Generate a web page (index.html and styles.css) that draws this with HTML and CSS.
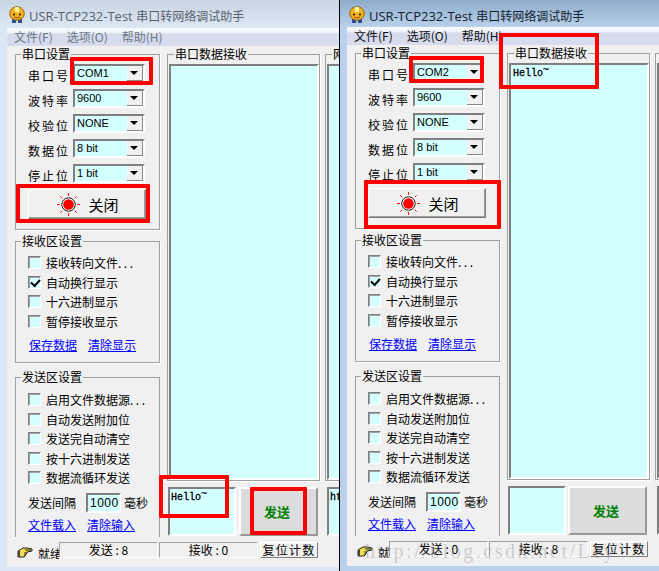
FILE: index.html
```html
<!DOCTYPE html>
<html lang="zh-CN">
<head>
<meta charset="utf-8">
<title>USR-TCP232-Test</title>
<link rel="stylesheet" href="styles.css">
</head>
<body>
<div class="desktop">

<section class="window win-a">
  <header class="titlebar">
    <svg class="app-icon" viewBox="0 0 16 17"><path d="M3 11h4v6H3zM9 11h4v6H9z" fill="#2b4f96"/><ellipse cx="8" cy="7.500" rx="7.300" ry="6.800" fill="#f6b21b" stroke="#8a6414"/><path d="M6 1h4v5H6z" fill="#fdf0a0"/><circle cx="5" cy="8.500" r="1.100" fill="#222"/><circle cx="11" cy="8.500" r="1.100" fill="#222"/><path d="M5 11q3 2 6 0" fill="none" stroke="#a03c10"/></svg>
    <span class="title-text">USR-TCP232-Test <span class="title-cjk">串口转网络调试助手</span></span>
  </header>
  <div class="client">
    <nav class="menubar"><span>文件(F)</span><span>选项(O)</span><span>帮助(H)</span></nav>
    <div class="main">
      <aside class="sidebar">
        <fieldset class="group group-port">
          <legend>串口设置</legend>
          <div class="field"><label>串口号</label><div class="combo"><span>COM1</span><i class="arrow"></i></div></div>
          <div class="field"><label>波特率</label><div class="combo"><span>9600</span><i class="arrow"></i></div></div>
          <div class="field"><label>校验位</label><div class="combo"><span>NONE</span><i class="arrow"></i></div></div>
          <div class="field"><label>数据位</label><div class="combo"><span>8 bit</span><i class="arrow"></i></div></div>
          <div class="field"><label>停止位</label><div class="combo"><span>1 bit</span><i class="arrow"></i></div></div>
          <button class="open-btn"><svg class="led" viewBox="0 0 24 24"><path d="M12 0v3M12 21v3M0 12h3M21 12h3M3.500 3.500l2 2M18.500 18.500l2 2M3.500 20.500l2-2M18.500 5.500l2-2" stroke="#f00" fill="none"/><circle cx="12" cy="12" r="7" fill="#fff" stroke="#111"/><circle cx="12" cy="12" r="5.500" fill="#f00"/></svg><span>关闭</span></button>
        </fieldset>
        <fieldset class="group group-recv">
          <legend>接收区设置</legend>
          <div class="check"><i class="box"></i><span>接收转向文件<span class="dots">...</span></span></div>
          <div class="check"><i class="box checked"></i><span>自动换行显示</span></div>
          <div class="check"><i class="box"></i><span>十六进制显示</span></div>
          <div class="check"><i class="box"></i><span>暂停接收显示</span></div>
          <div class="links links-recv"><a href="#">保存数据</a><a href="#">清除显示</a></div>
        </fieldset>
        <fieldset class="group group-send">
          <legend>发送区设置</legend>
          <div class="check"><i class="box"></i><span>启用文件数据源<span class="dots">...</span></span></div>
          <div class="check"><i class="box"></i><span>自动发送附加位</span></div>
          <div class="check"><i class="box"></i><span>发送完自动清空</span></div>
          <div class="check"><i class="box"></i><span>按十六进制发送</span></div>
          <div class="check"><i class="box"></i><span>数据流循环发送</span></div>
          <div class="interval"><span>发送间隔</span><div class="num">1000</div><span>毫秒</span></div>
          <div class="links links-send"><a href="#">文件载入</a><a href="#">清除输入</a></div>
        </fieldset>
      </aside>
      <div class="workspace">
        <div class="recv-row">
          <fieldset class="pane"><legend>串口数据接收</legend><div class="textbox"></div></fieldset>
          <fieldset class="pane"><legend>网络数据接收</legend><div class="textbox"></div></fieldset>
        </div>
        <div class="send-row">
          <div class="sendbox">Hello<span class="tilde">~</span></div>
          <button class="send-btn">发送</button>
          <div class="sendbox net">http://</div>
        </div>
      </div>
    </div>
    <footer class="status">
      <svg class="hand" viewBox="0 0 16 12"><path d="M1 4l5-3h4l5 1v2l-5 1v1l-1 1v1l-2 2H4L1 10z" fill="#f4e04c" stroke="#222"/><path d="M8 3h6M7 6h3M7 8h2" stroke="#222" fill="none"/><path d="M1 4h2v6H1z" fill="#444"/></svg>
      <span class="ready">就绪</span>
      <div class="panel">发送 : 8</div>
      <div class="panel">接收 : 0</div>
      <button class="reset">复位计数</button>
    </footer>
  </div>
  <div class="mark mark-a1"></div>
  <div class="mark mark-a2"></div>
  <div class="mark mark-a3"></div>
  <div class="mark mark-a4"></div>
</section>

<section class="window win-b">
  <header class="titlebar">
    <svg class="app-icon" viewBox="0 0 16 17"><path d="M3 11h4v6H3zM9 11h4v6H9z" fill="#2b4f96"/><ellipse cx="8" cy="7.500" rx="7.300" ry="6.800" fill="#f6b21b" stroke="#8a6414"/><path d="M6 1h4v5H6z" fill="#fdf0a0"/><circle cx="5" cy="8.500" r="1.100" fill="#222"/><circle cx="11" cy="8.500" r="1.100" fill="#222"/><path d="M5 11q3 2 6 0" fill="none" stroke="#a03c10"/></svg>
    <span class="title-text">USR-TCP232-Test <span class="title-cjk">串口转网络调试助手</span></span>
  </header>
  <div class="client">
    <nav class="menubar"><span>文件(F)</span><span>选项(O)</span><span>帮助(H)</span></nav>
    <div class="main">
      <aside class="sidebar">
        <fieldset class="group group-port">
          <legend>串口设置</legend>
          <div class="field"><label>串口号</label><div class="combo"><span>COM2</span><i class="arrow"></i></div></div>
          <div class="field"><label>波特率</label><div class="combo"><span>9600</span><i class="arrow"></i></div></div>
          <div class="field"><label>校验位</label><div class="combo"><span>NONE</span><i class="arrow"></i></div></div>
          <div class="field"><label>数据位</label><div class="combo"><span>8 bit</span><i class="arrow"></i></div></div>
          <div class="field"><label>停止位</label><div class="combo"><span>1 bit</span><i class="arrow"></i></div></div>
          <button class="open-btn"><svg class="led" viewBox="0 0 24 24"><path d="M12 0v3M12 21v3M0 12h3M21 12h3M3.500 3.500l2 2M18.500 18.500l2 2M3.500 20.500l2-2M18.500 5.500l2-2" stroke="#f00" fill="none"/><circle cx="12" cy="12" r="7" fill="#fff" stroke="#111"/><circle cx="12" cy="12" r="5.500" fill="#f00"/></svg><span>关闭</span></button>
        </fieldset>
        <fieldset class="group group-recv">
          <legend>接收区设置</legend>
          <div class="check"><i class="box"></i><span>接收转向文件<span class="dots">...</span></span></div>
          <div class="check"><i class="box checked"></i><span>自动换行显示</span></div>
          <div class="check"><i class="box"></i><span>十六进制显示</span></div>
          <div class="check"><i class="box"></i><span>暂停接收显示</span></div>
          <div class="links links-recv"><a href="#">保存数据</a><a href="#">清除显示</a></div>
        </fieldset>
        <fieldset class="group group-send">
          <legend>发送区设置</legend>
          <div class="check"><i class="box"></i><span>启用文件数据源<span class="dots">...</span></span></div>
          <div class="check"><i class="box"></i><span>自动发送附加位</span></div>
          <div class="check"><i class="box"></i><span>发送完自动清空</span></div>
          <div class="check"><i class="box"></i><span>按十六进制发送</span></div>
          <div class="check"><i class="box"></i><span>数据流循环发送</span></div>
          <div class="interval"><span>发送间隔</span><div class="num">1000</div><span>毫秒</span></div>
          <div class="links links-send"><a href="#">文件载入</a><a href="#">清除输入</a></div>
        </fieldset>
      </aside>
      <div class="workspace">
        <div class="recv-row">
          <fieldset class="pane"><legend>串口数据接收</legend><div class="textbox">Hello<span class="tilde">~</span></div></fieldset>
          <fieldset class="pane"><legend>网络数据接收</legend><div class="textbox"></div></fieldset>
        </div>
        <div class="send-row">
          <div class="sendbox"></div>
          <button class="send-btn">发送</button>
          <div class="sendbox net"></div>
        </div>
      </div>
    </div>
    <footer class="status">
      <svg class="hand" viewBox="0 0 16 12"><path d="M1 4l5-3h4l5 1v2l-5 1v1l-1 1v1l-2 2H4L1 10z" fill="#f4e04c" stroke="#222"/><path d="M8 3h6M7 6h3M7 8h2" stroke="#222" fill="none"/><path d="M1 4h2v6H1z" fill="#444"/></svg>
      <span class="ready">就绪</span>
      <div class="panel">发送 : 0</div>
      <div class="panel">接收 : 8</div>
      <button class="reset">复位计数</button>
    </footer>
  </div>
  <div class="watermark">http://blog.csdn.net/Ley</div>
  <div class="mark mark-b1"></div>
  <div class="mark mark-b2"></div>
  <div class="mark mark-b3"></div>
</section>

</div>
</body>
</html>
```
FILE: styles.css
```css
* { box-sizing: border-box; }
html, body { margin: 0; padding: 0; }
body {
  font-family: "Noto Sans CJK SC", "Liberation Sans", sans-serif;
  font-size: 12px;
  color: #000;
  background: #000;
}
button { font-family: inherit; margin: 0; padding: 0; }
.desktop {
  position: relative;
  width: 659px;
  height: 571px;
  overflow: hidden;
  background: #000;
}

/* windows on the desktop */
.window {
  position: absolute;
  top: 0;
  height: 571px;
  overflow: hidden;
  display: flex;
  flex-direction: column;
}
.win-a {
  left: 0;
  width: 339px;
  background: #dbe6f4;
  --title-h: 28px;
  --title-a: #c9d5e3;
  --title-b: #dde7f3;
  --title-ink: #56616e;
  --menu-ink: #6b7788;
  --pane-w: 153px;
  --send-w: 68px;
  --send-gap: 3px;
  --net-gap: 9px;
  --ready-w: 21px;
}
.win-b {
  left: 340px;
  width: 319px;
  background: #b9d1ea;
  --title-h: 27px;
  --title-a: #8eacca;
  --title-b: #b9d1ea;
  --title-ink: #10202e;
  --menu-ink: #111;
  --pane-w: 143px;
  --send-w: 58px;
  --send-gap: 2px;
  --net-gap: 10px;
  --ready-w: 11px;
}

.titlebar {
  flex: none;
  height: var(--title-h);
  padding: 6px 0 0 9px;
  display: flex;
  align-items: flex-start;
  background: linear-gradient(var(--title-a), var(--title-b));
}
.app-icon { width: 16px; height: 17px; flex: none; }
.title-text {
  margin-left: 4px;
  font-family: "Open Sans", "Noto Sans CJK SC", sans-serif;
  font-size: 13px;
  line-height: 20px;
  color: var(--title-ink);
  white-space: nowrap;
}
.title-cjk { font-family: "Noto Sans CJK SC", sans-serif; font-size: 12px; }

.client {
  flex: none;
  margin-left: 7px;
  width: 340px;
  height: 539px;
  background: #f0f0f0;
  display: flex;
  flex-direction: column;
}
.menubar {
  flex: none;
  height: 18px;
  padding-left: 7px;
  display: flex;
  gap: 14px;
  line-height: 18px;
  color: var(--menu-ink);
  background: linear-gradient(#fbfcfe, #eef2f9 25%, #d6dbee 35%, #d6dbee);
}
.main { flex: none; display: flex; height: 491px; padding-left: 8px; }

/* left column */
.sidebar { flex: none; width: 145px; display: flex; flex-direction: column; }
.group, .pane {
  margin: 0;
  min-width: 0;
  border: 1px solid #a0a0a0;
  padding: 0;
  box-shadow: 1px 1px 0 #fff;
}
legend {
  margin-left: 6px;
  padding: 0 1px;
  line-height: 16px;
  height: 16px;
  white-space: nowrap;
}
.group legend { margin-left: -7px; }
.group-port { height: 184px; padding: 2px 0 0 12px; }
.group-recv { height: 130px; margin-top: 3px; padding: 4px 0 0 12px; }
.group-send {
  height: 168px;
  margin-top: 6px;
  padding: 5px 0 0 12px;
  border-bottom: 0;
  box-shadow: none;
}

.field { display: flex; height: 18px; margin-bottom: 7px; }
.field label {
  width: 45px;
  padding-top: 3px;
  letter-spacing: 2px;
  line-height: 18px;
  white-space: nowrap;
}
.combo {
  width: 72px;
  height: 19px;
  display: flex;
  justify-content: space-between;
  background: #d4ffff;
  border: 2px solid;
  border-color: #7f7f7f #fff #fff #7f7f7f;
  font-family: "Liberation Sans", sans-serif;
  font-size: 11px;
  line-height: 15px;
  padding-left: 2px;
}
.combo .arrow {
  width: 16px;
  height: 15px;
  background: #f0f0f0;
  border-right: 1px solid #8a8a8a;
  border-bottom: 1px solid #8a8a8a;
  position: relative;
}
.arrow::after {
  content: "";
  position: absolute;
  left: 3px;
  top: 5px;
  border: 4px solid transparent;
  border-top: 4px solid #000;
  border-bottom: 0;
}

.open-btn {
  width: 118px;
  height: 30px;
  margin-top: 2px;
  padding-left: 2px;
  display: flex;
  align-items: center;
  justify-content: center;
  gap: 8px;
  background: #f0f0f0;
  border: 1px solid;
  border-color: #fff #7f7f7f #7f7f7f #fff;
  box-shadow: inset -1px -1px 0 #a0a0a0;
  font-size: 15px;
}
.led { width: 23px; height: 23px; flex: none; }

.check { display: flex; align-items: center; height: 19.500px; gap: 5px; white-space: nowrap; }
.dots { letter-spacing: 2.500px; }
.box {
  width: 13px;
  height: 13px;
  flex: none;
  background: #d4ffff;
  border: 1px solid;
  border-color: #7f7f7f #fff #fff #7f7f7f;
  box-shadow: inset 1px 1px 0 #a0a0a0;
  position: relative;
}
.box.checked::after {
  content: "";
  position: absolute;
  left: 2px;
  top: 2px;
  width: 7px;
  height: 4px;
  border-left: 2px solid #000;
  border-bottom: 2px solid #000;
  transform: rotate(-48deg);
}
.links { display: flex; height: 16px; line-height: 16px; gap: 11px; }
.links a { color: #00f; text-decoration: underline; }
.links-recv { margin: 6px 0 0 1px; }
.links-send { margin-top: 4px; }
.interval { display: flex; align-items: center; height: 20px; margin-top: 5px; white-space: nowrap; }
.num {
  width: 35px;
  height: 20px;
  margin: 0 3px 0 10px;
  padding-left: 2px;
  background: #d4ffff;
  border: 2px solid;
  border-color: #7f7f7f #fff #fff #7f7f7f;
  font-family: "Liberation Sans", sans-serif;
  font-size: 12px;
  letter-spacing: 0.500px;
  line-height: 16px;
}

/* receive / send */
.workspace { flex: none; margin-left: 7px; width: 200px; }
.recv-row { display: flex; gap: 5px; height: 435px; width: 400px; }
.pane { flex: none; width: var(--pane-w); height: 435px; display: flex; flex-direction: column; }
.textbox {
  height: 417px;
  margin: 2px 0 0 1px;
  padding: 2px 2px;
  background: #d4ffff;
  border: 2px solid;
  border-color: #7f7f7f #fff #fff #7f7f7f;
  font-family: "Liberation Mono", monospace;
  font-size: 10px;
  line-height: 14px;
  -webkit-text-stroke: 0.300px #000;
}
.tilde { position: relative; top: -3px; }
.send-row { display: flex; height: 49px; margin: 6px 0 0 1px; width: 400px; }
.sendbox {
  flex: none;
  width: var(--send-w);
  background: #d4ffff;
  border: 2px solid;
  border-color: #7f7f7f #fff #fff #7f7f7f;
  padding: 2px 0 0 1px;
  font-family: "Liberation Mono", monospace;
  font-size: 10px;
  line-height: 14px;
  -webkit-text-stroke: 0.300px #000;
}
.send-btn {
  flex: none;
  width: 79px;
  margin-left: var(--send-gap);
  padding-right: 3px;
  background: #dcdcdc;
  border: 2px solid;
  border-color: #fff #999 #999 #fff;
  color: #008000;
  font-size: 13px;
  font-weight: bold;
}
.sendbox.net { width: 60px; margin-left: var(--net-gap); }

/* status bar */
.status { flex: none; display: flex; height: 22px; padding: 5px 0 0 10px; }
.hand { width: 16px; height: 12px; flex: none; margin: 5px 5px 0 0; }
.ready { flex: none; width: var(--ready-w); overflow: hidden; white-space: nowrap; line-height: 20px; margin-top: 2px; }
.panel {
  flex: none;
  height: 16px;
  width: 99px;
  margin-right: 1px;
  background: #f0f0f0;
  border: 1px solid;
  border-color: #a0a0a0 #fff #fff #a0a0a0;
  text-align: center;
  line-height: 14px;
  white-space: nowrap;
}
.reset {
  flex: none;
  width: 58px;
  height: 16px;
  margin-left: 1px;
  font-size: 12px;
  letter-spacing: 1.300px;
  line-height: 14px;
  background: #f0f0f0;
  border: 1px solid;
  border-color: #fff #7f7f7f #7f7f7f #fff;
  white-space: nowrap;
}

/* overlays */
.watermark {
  position: absolute;
  left: 25px;
  top: 539px;
  font-family: "Liberation Serif", serif;
  font-size: 20px;
  letter-spacing: 2.500px;
  line-height: 24px;
  color: rgba(130, 130, 130, 0.35);
  white-space: nowrap;
  pointer-events: none;
}
.mark { position: absolute; border: 4px solid #f00; border-radius: 1px; }
.mark-a1 { left: 70px; top: 57px; width: 83px; height: 28px; }
.mark-a2 { left: 16px; top: 184px; width: 134px; height: 39px; }
.mark-a3 { left: 159px; top: 475px; width: 70px; height: 43px; }
.mark-a4 { left: 250px; top: 487px; width: 57px; height: 48px; }
.mark-b1 { left: 69px; top: 56px; width: 75px; height: 27px; }
.mark-b2 { left: 159px; top: 33px; width: 100px; height: 56px; }
.mark-b3 { left: 24px; top: 180px; width: 137px; height: 49px; }
```
